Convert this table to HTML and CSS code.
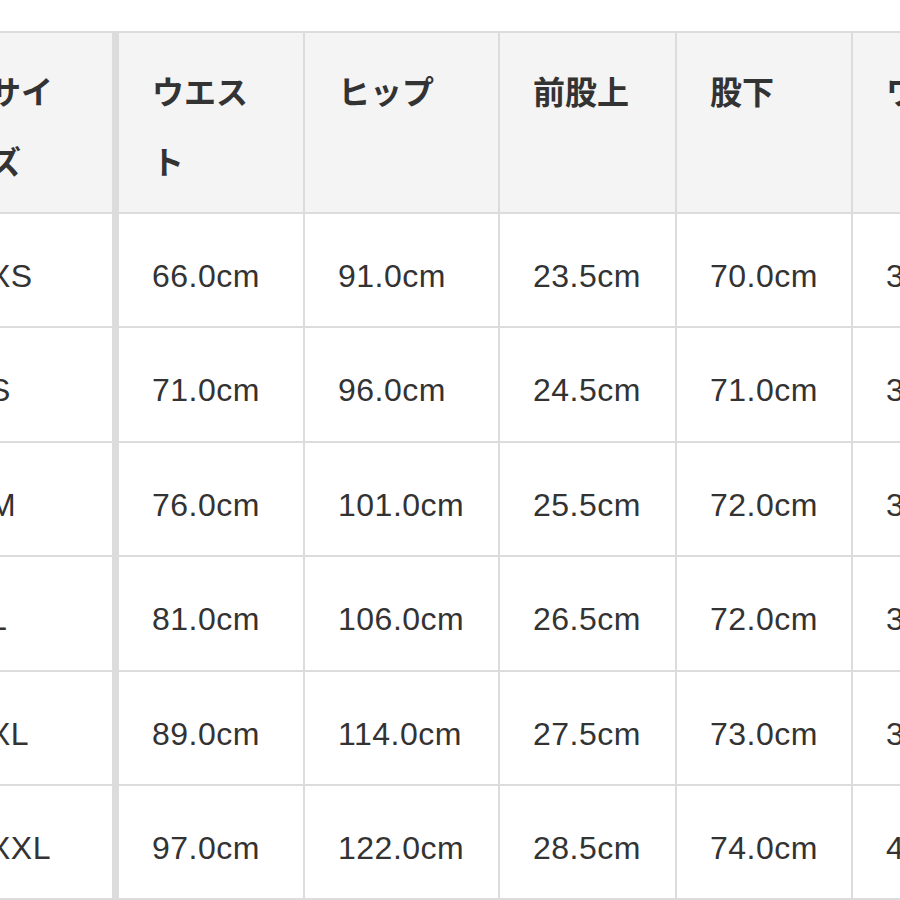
FILE: index.html
```html
<!DOCTYPE html>
<html lang="ja">
<head>
<meta charset="utf-8">
<title>サイズ表</title>
<link rel="stylesheet" href="styles.css">
</head>
<body>
<div class="scroller">
  <table class="size-table">
    <colgroup>
      <col class="c0"><col class="c1"><col class="c2"><col class="c3"><col class="c4"><col class="c5">
    </colgroup>
    <thead>
      <tr>
        <th class="first">サイズ</th>
        <th>ウエスト</th>
        <th>ヒップ</th>
        <th>前股上</th>
        <th>股下</th>
        <th>ワタリ</th>
      </tr>
    </thead>
    <tbody>
      <tr><td class="first">XS</td><td>66.0cm</td><td>91.0cm</td><td>23.5cm</td><td>70.0cm</td><td>30.0cm</td></tr>
      <tr><td class="first">S</td><td>71.0cm</td><td>96.0cm</td><td>24.5cm</td><td>71.0cm</td><td>31.5cm</td></tr>
      <tr><td class="first">M</td><td>76.0cm</td><td>101.0cm</td><td>25.5cm</td><td>72.0cm</td><td>33.0cm</td></tr>
      <tr><td class="first">L</td><td>81.0cm</td><td>106.0cm</td><td>26.5cm</td><td>72.0cm</td><td>34.5cm</td></tr>
      <tr><td class="first">XL</td><td>89.0cm</td><td>114.0cm</td><td>27.5cm</td><td>73.0cm</td><td>37.0cm</td></tr>
      <tr><td class="first">XXL</td><td>97.0cm</td><td>122.0cm</td><td>28.5cm</td><td>74.0cm</td><td>40.0cm</td></tr>
    </tbody>
  </table>
</div>
</body>
</html>
```
FILE: styles.css
```css
html, body {
  margin: 0;
  padding: 0;
  background: #ffffff;
}

.scroller {
  width: 900px;
  height: 900px;
  overflow: hidden;
  padding-top: 31px;
  box-sizing: border-box;
}

.size-table {
  margin-left: -44px;
  width: 1097px;
  table-layout: fixed;
  border-collapse: separate;
  border-spacing: 0;
  border-top: 2px solid #dcdcdc;
  font-family: "Liberation Sans", "Noto Sans CJK JP", sans-serif;
  font-size: 32px;
  color: #333333;
  letter-spacing: 0.5px;
}

.c0 { width: 163px; }
.c1 { width: 186px; }
.c2 { width: 195px; }
.c3 { width: 177px; }
.c4 { width: 176px; }
.c5 { width: 200px; }

.size-table th,
.size-table td {
  text-align: left;
  vertical-align: top;
  line-height: 70px;
  border-right: 2px solid #dcdcdc;
  border-bottom: 2px solid #dcdcdc;
  overflow: hidden;
}

.size-table th {
  background: #f4f4f4;
  font-weight: bold;
  padding: 25px 33px 14px;
  letter-spacing: 0;
}

.size-table td {
  background: #ffffff;
  font-weight: normal;
  padding: 27px 33px 15.4px;
}

.size-table .first {
  border-right-width: 7px;
}
```
